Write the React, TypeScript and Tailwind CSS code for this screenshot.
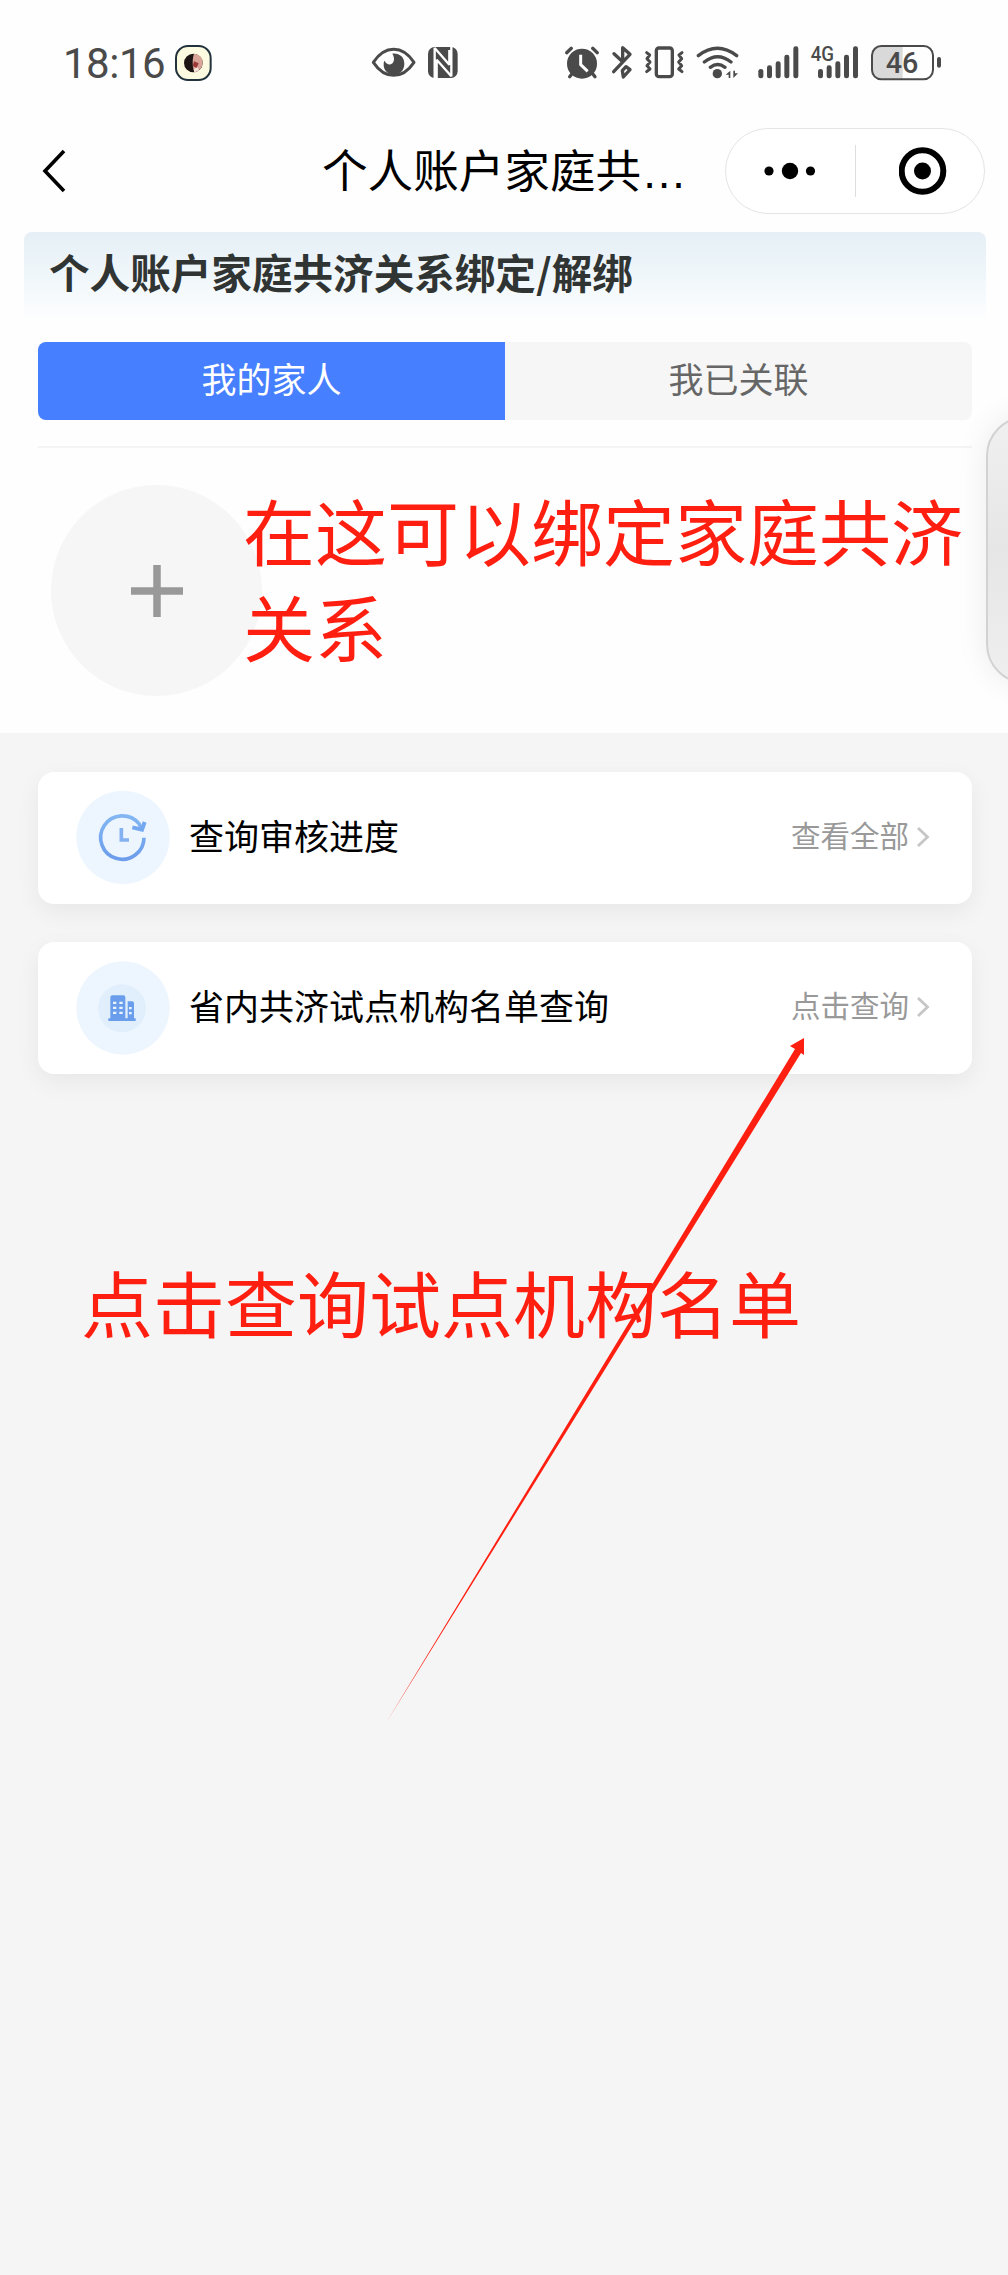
import { useState } from "react";
import type { ReactNode } from "react";
import clsx from "clsx";

const TABS = ["我的家人", "我已关联"];

const SIGNAL_BARS = [
  { x: 775, y: 147 },
  { x: 801, y: 136 },
  { x: 827, y: 124 },
  { x: 853, y: 104 },
  { x: 880, y: 79 },
];

function StatusBar() {
  return (
    <div className="flex h-[110px] items-start pt-[45px] pl-[63px] text-[#4a4a4a]">
      <span className="w-[112px] font-[Roboto] text-[42px] leading-[38px] tracking-[-0.5px]">18:16</span>

      {/* App badge */}
      <svg className="h-9 w-[37px]" viewBox="526 75 111 108" fill="none">
        <rect x="529" y="78" width="104" height="102" rx="36" fill="#fcfbe2" stroke="#22323c" strokeWidth="6" />
        <circle cx="581" cy="129" r="28" fill="#1d1514" />
        <path d="M583 101c18 2 27 14 26 28-1 13-9 23-24 28-7-12-8-40-2-56z" fill="#d9a598" />
        <path d="M583 124l14 6-6 14-12-6z" fill="#9c3a3a" />
        <path d="M582 147l12-5 4 9-14 6z" fill="#f4e3d8" />
      </svg>

      {/* Eye comfort */}
      <svg className="ml-[159px] h-9 w-[45px]" viewBox="1113 75 135 108" fill="none">
        <path
          d="M1120 127c16-24 36-39 61-39s45 15 61 39c-16 24-36 39-61 39s-45-15-61-39z"
          stroke="currentColor"
          strokeWidth="9"
          strokeLinejoin="round"
        />
        <path
          d="M1177 101c22-2 36 11 36 30 0 20-14 33-32 33s-31-14-30-32c0-4 1-8 3-10 4 9 11 13 18 11 10-3 14-18 5-32z"
          fill="currentColor"
        />
      </svg>

      {/* NFC */}
      <svg className="ml-[11px] h-9 w-8" viewBox="1281 75 96 108" fill="none">
        <rect x="1284" y="81" width="89" height="93" rx="20" fill="currentColor" />
        <path
          d="M1304 174V84l44 50V90M1354 81v88l-44-50v55"
          stroke="#fff"
          strokeWidth="7"
          strokeLinejoin="bevel"
        />
      </svg>

      {/* Alarm */}
      <svg className="ml-[105px] h-9 w-9" viewBox="192 75 108 108" fill="none">
        <circle cx="246" cy="131" r="45" fill="currentColor" />
        <path
          d="M200 98l14-13M292 98l-14-13M216 161l-7 9M278 161l7 9"
          stroke="currentColor"
          strokeWidth="10"
          strokeLinecap="round"
        />
        <path d="M242 104v30l21 20" stroke="#fff" strokeWidth="9" />
      </svg>

      {/* Bluetooth */}
      <svg className="ml-[11px] h-9 w-[22px]" viewBox="333 75 66 108" fill="none">
        <path
          d="M342 101l26 24V83l22 20-49 52M367 152l11-12 12 9-20 22z"
          stroke="currentColor"
          strokeWidth="10"
          strokeLinejoin="round"
          strokeLinecap="round"
        />
      </svg>

      {/* Vibrate */}
      <svg className="ml-[11px] h-9 w-[41px]" viewBox="432 75 123 108" fill="none">
        <rect x="469" y="84" width="48" height="86" rx="8" stroke="currentColor" strokeWidth="10" />
        <path
          d="M440 98l9 7-8 11 9 10-9 11 9 10-10 8M546 98l-9 7 8 11-9 10 9 11-9 10 10 8"
          stroke="currentColor"
          strokeWidth="9"
          strokeLinejoin="round"
          strokeLinecap="round"
        />
      </svg>

      {/* Wifi */}
      <svg className="ml-[11px] h-9 w-11" viewBox="588 75 132 108" fill="none">
        <path
          d="M595 107q57-44 115 0M613 126q40-32 80 0M631 142q22-17 44 0"
          stroke="currentColor"
          strokeWidth="10"
          strokeLinecap="round"
        />
        <circle cx="652" cy="161" r="14" fill="currentColor" />
        <path d="M677 164l14-12v22h-5v-10zM714 160l-14 14v-22h5v8z" fill="currentColor" />
      </svg>

      {/* Signal */}
      <svg className="ml-[17px] h-9 w-[42px]" viewBox="771 75 126 108">
        {SIGNAL_BARS.map((bar) => (
          <rect key={bar.x} x={bar.x} y={bar.y} width="15" height={175 - bar.y} rx="7" fill="currentColor" />
        ))}
      </svg>

      {/* 4G signal */}
      <svg className="ml-[11px] h-9 w-[50px] overflow-visible" viewBox="930 75 150 108">
        {SIGNAL_BARS.map((bar) => (
          <rect key={bar.x} x={bar.x + 179} y={bar.y} width="15" height={175 - bar.y} rx="7" fill="currentColor" />
        ))}
        <text
          x="932"
          y="124"
          textLength="70"
          lengthAdjust="spacingAndGlyphs"
          className="font-[Roboto] text-[58px] font-medium"
          fill="currentColor"
        >
          4G
        </text>
      </svg>

      {/* Battery */}
      <svg className="ml-[10px] h-9 w-[72px] overflow-visible" viewBox="1110 75 216 108" fill="none">
        <path d="M1144 80h64v96h-64q-26 0-26-26v-44q0-26 26-26z" fill="#d9d9d9" />
        <rect x="1116" y="78" width="183" height="100" rx="28" stroke="currentColor" strokeWidth="6" />
        <rect x="1311" y="111" width="12" height="32" rx="6" fill="currentColor" />
        <text
          x="1157"
          y="160"
          textLength="98"
          lengthAdjust="spacingAndGlyphs"
          className="font-[Roboto] text-[89px] font-medium"
          fill="currentColor"
        >
          46
        </text>
      </svg>
    </div>
  );
}

function NavBar() {
  return (
    <header className="flex h-[122px] items-center pt-0.5 pr-[23px] pb-[3px] pl-[42px]">
      <svg className="h-11 w-6" viewBox="0 0 24 44" fill="none">
        <path d="M22 2L3 22l19 20" stroke="#000" strokeWidth="3.6" />
      </svg>
      <h1 className="ml-[256px] w-[403px] pt-[5px] text-[45.6px] leading-none whitespace-nowrap text-black">
        个人账户家庭共…
      </h1>
      <div className="flex h-[86px] w-[260px] items-center rounded-full border border-[#e4e4e4] bg-white">
        <svg className="h-6 w-[129px]" viewBox="0 0 129 24">
          <circle cx="43" cy="12" r="4.6" />
          <circle cx="64" cy="12" r="8.2" />
          <circle cx="84.5" cy="12" r="4.6" />
        </svg>
        <div className="h-[52px] w-px bg-[#dedede]" />
        <svg className="ml-[43px] h-12 w-12" viewBox="0 0 48 48">
          <circle cx="23.5" cy="24" r="20.8" fill="none" stroke="#000" strokeWidth="6" />
          <circle cx="23.5" cy="24" r="8.5" />
        </svg>
      </div>
    </header>
  );
}

function ProgressIcon() {
  return (
    <svg className="mb-0.5 h-[94px] w-[94px]" viewBox="230 120 282 282" fill="none">
      <defs>
        <linearGradient id="progress" x1="0" y1="0" x2="0" y2="1">
          <stop offset="0" stopColor="#83b7f3" />
          <stop offset="1" stopColor="#6c9ceb" />
        </linearGradient>
      </defs>
      <circle cx="371" cy="262" r="140" fill="#edf6fe" />
      <path d="M434 263a65 65 0 1 1-15-42l8 16" stroke="url(#progress)" strokeWidth="11" />
      <path d="M436 216l-8 23-29-7" stroke="#73a8f0" strokeWidth="12" />
      <path d="M366 234v36h23" stroke="#84b1f1" strokeWidth="11" />
    </svg>
  );
}

function BuildingIcon() {
  return (
    <svg className="h-[94px] w-[94px]" viewBox="230 632 282 282">
      <circle cx="371" cy="773" r="140" fill="#edf6fe" />
      <circle cx="368" cy="774" r="72" fill="#e1effc" />
      <path
        d="M327 804h6v-63q0-6 6-6h33q6 0 6 6v63h7v-51h13q6 0 6 6v45h5v8h-82z"
        fill="#6a9eec"
      />
      <path
        d="M341 754h10v7h-10zM360 754h10v7h-10zM341 769h10v7h-10zM360 769h10v7h-10zM341 784h10v7h-10zM360 784h10v7h-10zM389 770h8v7h-8zM389 785h8v7h-8z"
        fill="#eaf4fe"
      />
    </svg>
  );
}

function ActionCard({ icon, title, action }: { icon: ReactNode; title: string; action: string }) {
  return (
    <button
      type="button"
      className="flex h-[132px] w-full items-center rounded-2xl bg-white pr-[42px] pl-[38px] text-left shadow-[0_8px_24px_rgba(0,0,0,0.06)]"
    >
      {icon}
      <span className="mb-0.5 ml-[19px] flex-1 text-[35px] leading-none text-black">{title}</span>
      <span className="mb-0.5 text-[29.5px] leading-none text-[#999999]">{action}</span>
      <svg className="mb-0.5 ml-[7px] h-[22px] w-[14px]" viewBox="0 0 14 22" fill="none">
        <path d="M2 2l9.5 9L2 20" stroke="#c6c6c6" strokeWidth="2.8" />
      </svg>
    </button>
  );
}

export default function App() {
  const [tab, setTab] = useState(0);

  return (
    <div className="relative h-[2275px] w-[1008px] overflow-hidden bg-[#f5f5f5] font-['Liberation_Sans','Noto_Sans_CJK_SC',sans-serif]">
      <div className="h-[733px] bg-[#fefefe]">
        <StatusBar />
        <NavBar />

        <div className="mr-[22px] ml-6 h-[90px] rounded-t-lg bg-linear-to-b from-[#e5eff5] via-[#f0f7fb] to-[#fefefe] pt-5 pl-[25px] pr-6">
          <h2 className="font-['Noto_Sans_CJK_SC',sans-serif] text-[40.6px] leading-[40px] font-bold text-[#303433]">
            个人账户家庭共济关系绑定/解绑
          </h2>
        </div>

        <div className="mt-5 mr-9 ml-[38px] flex h-[78px] overflow-hidden rounded-lg">
          {TABS.map((label, i) => (
            <button
              key={label}
              type="button"
              onClick={() => setTab(i)}
              className={clsx(
                "flex-1 pb-0.5 text-[35px] leading-none",
                tab === i ? "bg-[#467fff] text-white" : "bg-[#f6f6f6] text-[#666666]"
              )}
            >
              {label}
            </button>
          ))}
        </div>

        <div className="mt-[26px] mr-9 ml-[38px] h-0.5 bg-[#f4f4f4]" />

        <button
          type="button"
          aria-label="添加"
          className="mt-[37px] ml-[51px] flex h-[211px] w-[211px] items-center justify-center rounded-full bg-[#f6f6f6]"
        >
          <svg className="mt-px h-[52px] w-[52px]" viewBox="0 0 52 52" fill="none">
            <path d="M26 0v52M0 26h52" stroke="#999999" strokeWidth="7.5" />
          </svg>
        </button>
      </div>

      <div className="flex flex-col gap-[38px] pt-[39px] pr-9 pl-[38px]">
        <ActionCard icon={<ProgressIcon />} title="查询审核进度" action="查看全部" />
        <ActionCard icon={<BuildingIcon />} title="省内共济试点机构名单查询" action="点击查询" />
      </div>

      {/* Edge panel handle */}
      <div className="absolute top-[416px] left-[986px] h-[268px] w-20 rounded-[40px] border-2 border-[#d2d2d2] bg-linear-to-b from-[#f0f0f0] via-[#e6e6e6] to-[#efefef] shadow-[0_0_32px_rgba(0,0,0,0.08)]" />

      {/* Annotations */}
      <p className="absolute top-[487px] left-[243px] w-[730px] text-[72px] leading-[96px] text-[#ff1f10]">
        在这可以绑定家庭共济关系
      </p>
      <p className="absolute top-[1259px] left-[81px] text-[72px] leading-[96px] whitespace-nowrap text-[#ff1f10]">
        点击查询试点机构名单
      </p>
      <svg className="absolute top-[1030px] left-[380px] h-[700px] w-[440px]" viewBox="380 1030 440 700">
        <path d="M804 1038l-14 8 5 3L386 1723l415-670 3 2z" fill="#ff1f10" />
      </svg>
    </div>
  );
}
